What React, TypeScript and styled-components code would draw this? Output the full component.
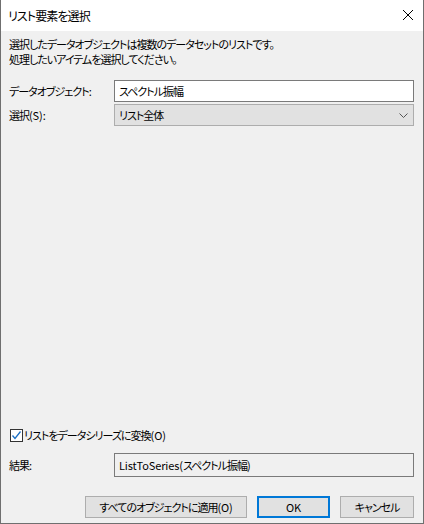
import * as React from "react";
import { FC } from "react";
import styled, { createGlobalStyle } from "styled-components";

const GlobalStyle = createGlobalStyle`
  html, body {
    margin: 0;
    padding: 0;
    background: #ffffff;
  }
  * {
    box-sizing: border-box;
  }
`;

const font = `"Noto Sans CJK JP", "Noto Sans", sans-serif`;

const Window = styled.div`
  width: 424px;
  height: 524px;
  border: 1px solid #6f6f6f;
  border-top: none;
  display: flex;
  flex-direction: column;
  font-family: ${font};
  font-size: 11px;
  letter-spacing: -1px;
  font-feature-settings: "palt";
  color: #000;
`;

const TitleBar = styled.div`
  height: 31px;
  background: #ffffff;
  display: flex;
  align-items: center;
  justify-content: space-between;
  padding: 0 9px 1px 7px;
`;

const Title = styled.span`
  font-size: 12px;
  letter-spacing: -0.9px;
`;

const CloseButton = styled.span`
  width: 12px;
  height: 12px;
  display: flex;
`;

const Body = styled.div`
  flex: 1;
  background: #f0f0f0;
  display: flex;
  flex-direction: column;
  padding: 6px 9px 5px 8px;
`;

const Intro = styled.p`
  margin: 0;
  line-height: 15px;
`;

const Form = styled.div`
  margin-top: 13px;
  display: grid;
  grid-template-columns: 105px 300px;
  row-gap: 2px;
  align-items: center;
`;

const Label = styled.span`
  line-height: 15px;
`;

const TextBox = styled.div<{ $readonly?: boolean; $h?: number }>`
  height: ${(p) => p.$h ?? 22}px;
  border: 1px solid #7a7a7a;
  background: ${(p) => (p.$readonly ? "#f0f0f0" : "#ffffff")};
  display: flex;
  align-items: center;
  padding-left: 4px;
`;

const Latin = styled.span`
  letter-spacing: -0.1px;
`;

const Select = styled.div`
  height: 22px;
  border: 1px solid #adadad;
  background: #e1e1e1;
  display: flex;
  align-items: center;
  justify-content: space-between;
  padding: 0 5px 0 4px;
`;

const Spacer = styled.div`
  flex: 1;
`;

const CheckRow = styled.label`
  display: flex;
  align-items: center;
  gap: 1px;
  margin-left: 1px;
  line-height: 15px;
`;

const Box = styled.span`
  width: 13px;
  height: 13px;
  border: 1px solid #333333;
  background: #ffffff;
  display: flex;
  align-items: center;
  justify-content: center;
`;

const ResultRow = styled(Form)`
  margin-top: 10px;
`;

const Buttons = styled.div`
  margin-top: 19px;
  display: flex;
  justify-content: flex-end;
  gap: 10px;
`;

const Button = styled.button<{ $w: number; $default?: boolean }>`
  width: ${(p) => p.$w}px;
  height: 22px;
  padding: 0;
  font-family: ${font};
  font-size: 11px;
  letter-spacing: -1px;
  font-feature-settings: "palt";
  color: #000;
  background: #e1e1e1;
  border: ${(p) => (p.$default ? "2px solid #0078d7" : "1px solid #adadad")};
  border-radius: 0;
  white-space: nowrap;
`;

const Chevron: FC = () => (
  <svg width="9" height="5" viewBox="0 0 9 5">
    <path d="M0.5 0.5 L4.5 4.5 L8.5 0.5" fill="none" stroke="#555" strokeWidth="1" />
  </svg>
);

const App: FC = () => (
  <>
    <GlobalStyle />
    <Window>
      <TitleBar>
        <Title>リスト要素を選択</Title>
        <CloseButton>
          <svg width="12" height="12" viewBox="0 0 12 12">
            <path d="M1 1 L11 11 M11 1 L1 11" stroke="#000" strokeWidth="1" />
          </svg>
        </CloseButton>
      </TitleBar>
      <Body>
        <Intro>
          選択したデータオブジェクトは複数のデータセットのリストです。
          <br />
          処理したいアイテムを選択してください。
        </Intro>
        <Form>
          <Label>データオブジェクト:</Label>
          <TextBox>スペクトル振幅</TextBox>
          <Label>
            選択<Latin>(S):</Latin>
          </Label>
          <Select>
            <span>リスト全体</span>
            <Chevron />
          </Select>
        </Form>
        <Spacer />
        <CheckRow>
          <Box>
            <svg width="11" height="11" viewBox="0 0 11 11">
              <path d="M1.5 5.5 L4 8.5 L9.5 1.5" fill="none" stroke="#1a6fc4" strokeWidth="1.3" />
            </svg>
          </Box>
          <span>
            リストをデータシリーズに変換<Latin>(O)</Latin>
          </span>
        </CheckRow>
        <ResultRow>
          <Label>
            結果<Latin>:</Latin>
          </Label>
          <TextBox $readonly $h={24}>
            <Latin>ListToSeries(</Latin>スペクトル振幅<Latin>)</Latin>
          </TextBox>
        </ResultRow>
        <Buttons>
          <Button $w={162}>
            すべてのオブジェクトに適用<Latin>(O)</Latin>
          </Button>
          <Button $w={73} $default>
            <Latin>OK</Latin>
          </Button>
          <Button $w={74}>キャンセル</Button>
        </Buttons>
      </Body>
    </Window>
  </>
);

export default App;
